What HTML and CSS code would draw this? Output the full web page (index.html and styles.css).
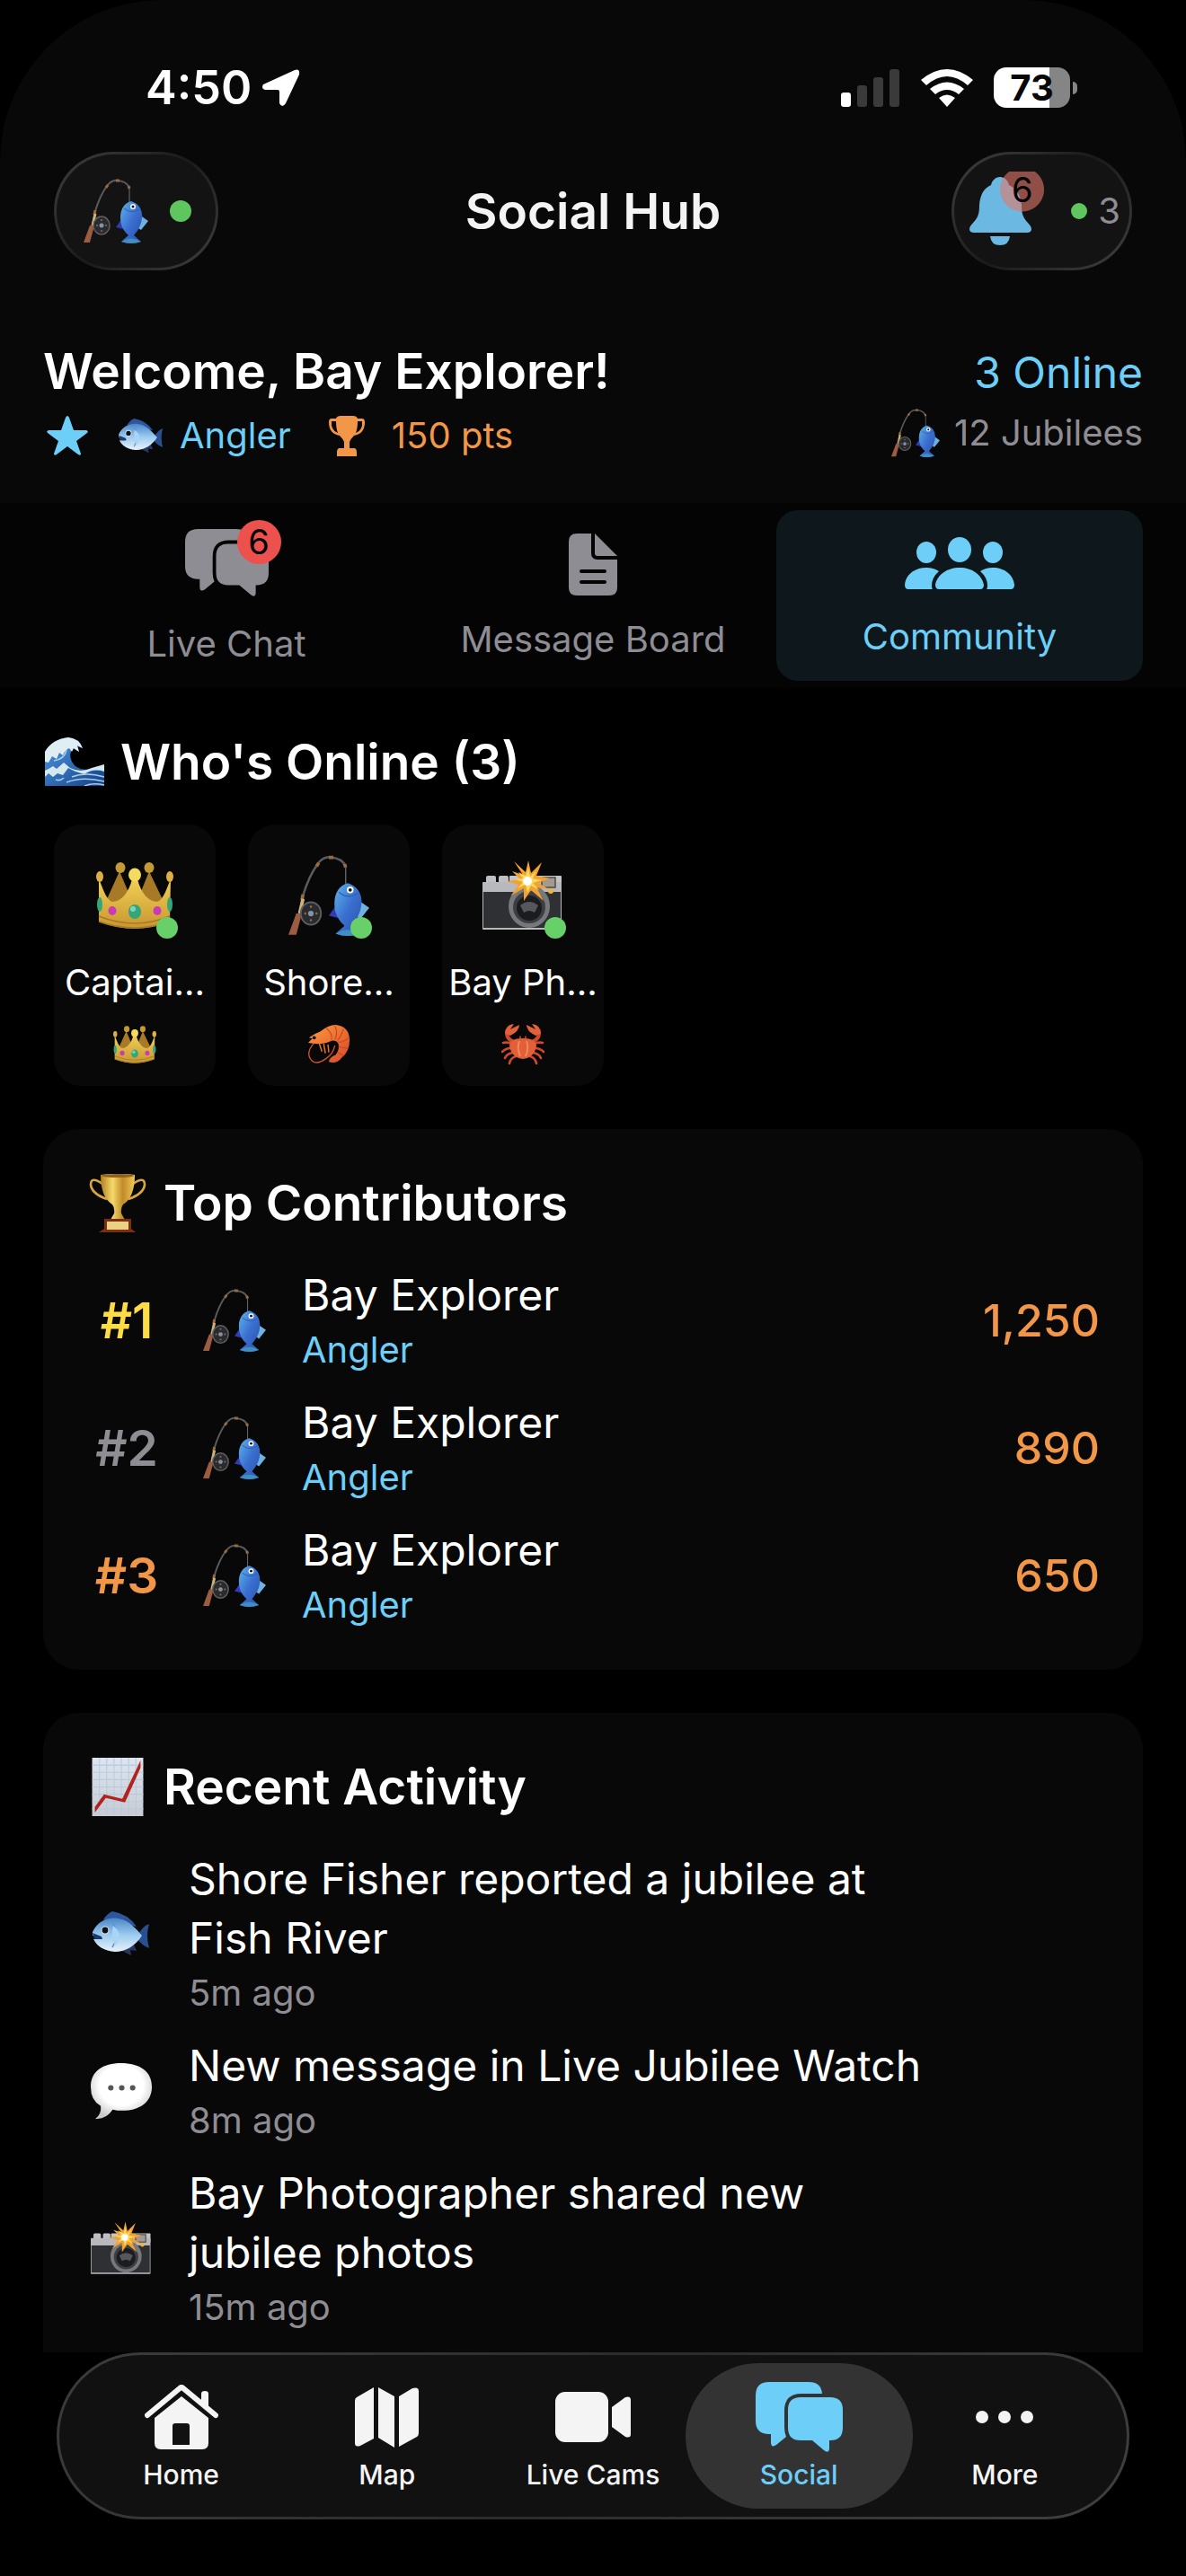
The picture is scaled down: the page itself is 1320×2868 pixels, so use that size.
FILE: index.html
```html
<!DOCTYPE html>
<html lang="en">
<head>
<meta charset="utf-8">
<meta name="viewport" content="width=device-width, initial-scale=1">
<title>Social Hub</title>
<link rel="stylesheet" href="styles.css">
</head>
<body>
<svg class="sprite" aria-hidden="true">
  <defs>
    <linearGradient id="g-fish" x1="0" y1="0" x2="0" y2="1"><stop offset="0" stop-color="#4a86c8"/><stop offset=".5" stop-color="#9ccbf0"/><stop offset="1" stop-color="#e8f1f8"/></linearGradient>
    <linearGradient id="g-catch" x1="0" y1="0" x2="1" y2="1"><stop offset="0" stop-color="#5fb4ea"/><stop offset=".5" stop-color="#3a6fcf"/><stop offset="1" stop-color="#2a4fa8"/></linearGradient>
    <linearGradient id="g-gold" x1="0" y1="0" x2="1" y2="0"><stop offset="0" stop-color="#b07f22"/><stop offset=".35" stop-color="#f6d96a"/><stop offset=".65" stop-color="#c08a28"/><stop offset="1" stop-color="#f0c958"/></linearGradient>
    <linearGradient id="g-crown" x1="0" y1="0" x2="0" y2="1"><stop offset="0" stop-color="#f0d055"/><stop offset="1" stop-color="#c99631"/></linearGradient>
    <radialGradient id="g-bubble" cx=".5" cy=".4" r=".6"><stop offset=".6" stop-color="#fff"/><stop offset="1" stop-color="#c9c9cb"/></radialGradient>
    <linearGradient id="g-paper" x1="0" y1="0" x2="0" y2="1"><stop offset="0" stop-color="#dde5ee"/><stop offset="1" stop-color="#c9ccd2"/></linearGradient>
    <linearGradient id="g-prawn" x1="0" y1="0" x2="1" y2="1"><stop offset="0" stop-color="#ff9a3d"/><stop offset="1" stop-color="#d9482a"/></linearGradient>
    <linearGradient id="g-sea" x1="0" y1="0" x2="1" y2="1"><stop offset="0" stop-color="#4f9be0"/><stop offset="1" stop-color="#123f8a"/></linearGradient>
  </defs>

  <symbol id="rod" viewBox="0 0 72 72">
    <path d="M10 52L13 36C16 26 21 15 26 8Q31 1 38 2Q48 3 51 10" fill="none" stroke="#5b5a5e" stroke-width="2"/>
    <path d="M25 10l2-3M36 2h4M50 8l1 3M12 40l1-5" stroke="#9a6a3c" stroke-width="3"/>
    <path d="M51 10V27" stroke="#6b6f76" stroke-width="1"/>
    <path d="M7 52h5L7 71H0z" fill="#9b5c42"/>
    <path d="M10 52l3-13" stroke="#cdb27a" stroke-width="3"/>
    <ellipse cx="20" cy="52" rx="9" ry="10" fill="#2a2b2e" stroke="#5d5f64" stroke-width="1.500"/>
    <circle cx="20" cy="52" r="2.500" fill="#7f94a8"/>
    <circle cx="20" cy="46" r="1" fill="#a5673d"/><circle cx="25" cy="52" r="1" fill="#a5673d"/><circle cx="20" cy="58" r="1" fill="#a5673d"/><circle cx="15" cy="52" r="1" fill="#a5673d"/>
    <path d="M43 44L36 54l8 2z" fill="#3439b4"/>
    <path d="M62 40l10 7-8 10-5-3z" fill="#6fb2e2"/>
    <path d="M53 25C62 28 66 35 65 44C64 53 60 58 56 63L64 70Q53 74 42 70L50 63C43 57 41 50 41 43C41 34 45 27 53 25z" fill="url(#g-catch)"/>
    <path d="M45 33q8 7 17 1" fill="none" stroke="#2d5fae" stroke-width="1"/>
    <path d="M42 70q11-7 22 0-11 4-22 0z" fill="#3f8fc4"/>
    <circle cx="55" cy="31" r="3" fill="#fff"/><circle cx="55" cy="31" r="1.500" fill="#111"/>
  </symbol>

  <symbol id="fish" viewBox="0 0 64 50">
    <path d="M12 9Q17 2 22 0Q40 3 49 17z" fill="#2d569c"/>
    <path d="M50 27Q56 16 63 14Q59 27 63 41Q55 38 50 31z" fill="#2a4f8e"/>
    <path d="M29 42l14 7-1-6 7 1-3-7z" fill="#27375f"/>
    <path d="M0 23C6 10 18 6 29 8C41 10 49 20 55 27C48 38 37 45 25 45C13 44 5 39 1 31L10 31Q6 27 0 27z" fill="url(#g-fish)"/>
    <path d="M22 13Q31 25 22 40" fill="none" stroke="#5a92cc" stroke-width="1.500"/>
    <path d="M23 16Q36 27 25 38Q20 27 23 16z" fill="#a9d4f5"/>
    <path d="M0 24l10 4 1 3-9 0z" fill="#1f3a72"/>
    <circle cx="14" cy="21" r="4.500" fill="#cfe2f2"/><circle cx="14" cy="21" r="3.400" fill="#111"/>
  </symbol>

  <symbol id="crown" viewBox="0 0 86 74">
    <path d="M8 50L26 10 43 50zM43 50L59 10 78 50z" fill="#a87a26"/>
    <ellipse cx="27" cy="6" rx="5.500" ry="6" fill="#c59a35"/><ellipse cx="59" cy="6" rx="5.500" ry="6" fill="#c59a35"/>
    <path d="M3 18C9 34 12 42 18 44C28 44 36 34 40 19H46C50 34 58 44 68 44C74 42 77 34 83 18L82 66Q43 82 3 66z" fill="url(#g-crown)"/>
    <ellipse cx="43" cy="14" rx="7" ry="7.500" fill="#f6da5d"/>
    <ellipse cx="4" cy="16" rx="4" ry="6" fill="#dcb044"/><ellipse cx="82" cy="16" rx="4" ry="6" fill="#dcb044"/>
    <path d="M3 60Q43 76 82 60M3 66Q43 80 82 66" fill="none" stroke="#a87a26" stroke-width="1.500"/>
    <ellipse cx="43" cy="55" rx="7" ry="8" fill="#33a67c"/><ellipse cx="41" cy="52" rx="3" ry="3" fill="#7fd6b4"/>
    <ellipse cx="18" cy="54" rx="4.500" ry="5" fill="#c93bb4"/><ellipse cx="68" cy="54" rx="4.500" ry="5" fill="#c93bb4"/>
    <ellipse cx="4" cy="47" rx="3" ry="8" fill="#33a67c"/><ellipse cx="82" cy="47" rx="3" ry="8" fill="#33a67c"/>
  </symbol>

  <symbol id="camera" viewBox="0 0 90 78">
    <rect x="4" y="17" width="11" height="9" rx="2" fill="#bfc0c4"/><rect x="18" y="17" width="11" height="9" rx="2" fill="#bfc0c4"/>
    <rect x="30" y="17" width="58" height="14" rx="1" fill="#c5c6c9"/>
    <rect x="0" y="24" width="88" height="53" rx="1" fill="#b8b9bd"/>
    <rect x="1" y="35" width="86" height="40" fill="#2f3033"/>
    <rect x="66" y="19" width="15" height="11" fill="#a59a92" stroke="#4a4a4a" stroke-width="1.500"/>
    <ellipse cx="52" cy="51" rx="23" ry="24" fill="#77787c"/>
    <circle cx="52" cy="52" r="18" fill="#3d3e42"/><circle cx="52" cy="53" r="14" fill="#1b1c1f"/>
    <path d="M42 50q10-8 20 0l-4 8q-6-4-12 0z" fill="#55575c"/>
    <circle cx="76" cy="34" r="3" fill="#e6b93e"/>
    <path d="M51 0l3 14L66 2 60 17l15 3-13 5 12 7-14-2 8 15-14-12-8 12 0-14-14 8 8-12-13-4 15-2-9-9 12 4-10-15 13 12z" fill="#f3a231"/>
    <path d="M51 8l2 10 7-7-4 9 10 2-10 3 7 8-9-5-4 8-2-9-9 4 6-7-9-3 9-1-5-7 8 4z" fill="#fbd95c"/>
    <circle cx="50" cy="23" r="5" fill="#fff"/>
  </symbol>

  <symbol id="shrimp" viewBox="0 0 50 46">
    <path d="M8 21Q-2 32 4 40T22 39Q30 34 32 24" fill="none" stroke="#c8562c" stroke-width="1.400"/>
    <path d="M14 22l3 9M19 22l2 11M24 23l1 9" stroke="#e0702f" stroke-width="1.600"/>
    <path d="M1 21L6 16 2 15Q9 10 15 8Q24 0 33 0Q49 2 49 18Q49 31 40 38Q34 46 25 43Q26 37 33 35Q38 28 36 22Q33 17 27 19Q17 24 1 21z" fill="url(#g-prawn)"/>
    <path d="M22 4q8 6 6 14M32 1q4 9 0 16M42 5q-3 9-7 13M48 15q-7 6-12 5M47 27q-6 0-11-2M42 36q-4-3-7-4" fill="none" stroke="#c4491f" stroke-width="1.200"/>
    <circle cx="8" cy="15" r="2" fill="#111"/>
  </symbol>

  <symbol id="crab" viewBox="0 0 48 46">
    <g fill="none" stroke="#cf4a2c" stroke-width="2.600" stroke-linecap="round">
      <path d="M12 22Q6 20 2 21M11 27Q5 27 1 31M13 32Q6 33 4 38M16 36Q10 38 9 44M36 22Q42 20 46 21M37 27Q43 27 47 31M35 32Q42 33 44 38M32 36Q38 38 39 44"/>
      <path d="M14 20Q4 16 7 8M34 20Q44 16 41 8" stroke-width="4"/>
      <path d="M21 18v-4M27 18v-4" stroke-width="1.500"/>
    </g>
    <path d="M4 11Q4 1 14 0L10 6 20 1Q20 8 10 13zM44 11Q44 1 34 0L38 6 28 1Q28 8 38 13z" fill="#e2603a"/>
    <path d="M24 16Q39 16 39 25Q36 38 24 39Q12 38 9 25Q9 16 24 16z" fill="#e35f38"/>
    <path d="M20 19Q17 27 21 36M28 19Q31 27 27 36" fill="none" stroke="#f08a5a" stroke-width="2"/>
  </symbol>

  <symbol id="wave" viewBox="0 0 66 54">
    <path d="M0 16Q8 2 26 0Q38 1 42 12L36 10 38 16 31 12Q26 18 30 27Q36 38 50 35L66 32V54H0z" fill="url(#g-sea)"/>
    <path d="M0 16Q8 2 26 0Q38 1 42 12L36 9 38 16 32 12 30 16 27 12Q22 14 20 20L16 17 13 24 8 21 4 28 0 27z" fill="#dfeef2"/>
    <path d="M4 35l5-3 4 3 8-7 7 6Q40 40 52 34L66 30v8Q54 34 44 41L34 38 26 34 20 42 14 40 9 44 4 40 0 44v-7z" fill="#d5e8ee"/>
    <path d="M30 44Q45 38 66 44M24 50Q42 43 66 49M44 54Q54 50 66 53M12 47q5 2 9-2M10 26Q22 24 24 14" fill="none" stroke="#a9cbe4" stroke-width="1.600"/>
  </symbol>

  <symbol id="trophy-gold" viewBox="0 0 64 65">
    <path d="M15 11Q2 2 2 12Q3 22 20 28M49 11Q62 2 62 12Q61 22 44 28" fill="none" stroke="#d9a63c" stroke-width="2.600"/>
    <path d="M13 1Q32-2 51 1Q51 26 38 34Q35 38 36 44L40 51H24L28 44Q29 38 26 34Q13 26 13 1z" fill="url(#g-gold)"/>
    <ellipse cx="32" cy="2" rx="18" ry="2" fill="#8f6418"/>
    <path d="M17 50H47V61L52 65H11L17 61z" fill="#7a2f12"/>
    <rect x="20" y="53" width="24" height="9" fill="#ecd182"/>
  </symbol>

  <symbol id="chart" viewBox="0 0 56 64">
    <rect width="56" height="64" fill="url(#g-paper)"/>
    <path d="M0 8H56M0 16H56M0 24H56M0 32H56M0 40H56M0 48H56M0 56H56M8 0V64M16 0V64M24 0V64M32 0V64M40 0V64M48 0V64" stroke="#b5cbe2" stroke-width="1"/>
    <path d="M3 60V54L13 40 33 45 53 3V11L36 49 15 44z" fill="#b3231c"/>
  </symbol>

  <symbol id="bubble" viewBox="0 0 67 67">
    <path d="M33 3C54 3 67 12 67 29C67 46 53 55 35 55C30 55 28 55 24 54Q17 65 5 64Q12 59 11 50Q0 44 0 29C0 12 13 3 33 3z" fill="url(#g-bubble)"/>
    <circle cx="22" cy="30" r="3" fill="#555"/><circle cx="34" cy="30" r="3" fill="#555"/><circle cx="46" cy="30" r="3" fill="#555"/>
  </symbol>

  <symbol id="chat" viewBox="0 0 97 78">
    <path d="M15 0H59Q73 0 74 13H51Q32 13 32 32V50Q32 56 34 61L23 70Q17 74 17 67V58H15Q0 58 0 43V15Q0 0 15 0z"/>
    <path d="M50 17H83Q97 17 97 31V51Q97 65 83 65H82V75Q81 80 76 76L63 65H50Q36 65 36 51V31Q36 17 50 17z"/>
  </symbol>
</svg>

<header class="top">
  <div class="status">
    <div class="status-group">
      <span class="clock">4:50</span>
      <svg class="ico-arrow" viewBox="0 0 42 42"><path d="M36 1Q42-1 41 6L26 38Q22 44 19 38V25Q19 23 17 23H4Q-2 22 1 17z"/></svg>
    </div>
    <div class="status-group status-right">
      <svg class="ico-signal" viewBox="0 0 66 42"><rect y="26" width="11" height="16" rx="3"/><g fill="#3a3a3a"><rect x="18" y="18" width="11" height="24" rx="3"/><rect x="36" y="9" width="11" height="33" rx="3"/><rect x="54" width="11" height="42" rx="3"/></g></svg>
      <svg class="ico-wifi" viewBox="0 0 58 42"><path d="M29 42L20 32Q29 25 38 32zM16 28L10 22Q29 7 48 22L42 28Q29 18 16 28zM6 18L0 12Q29-12 58 12L52 18Q29-2 6 18z"/></svg>
      <div class="battery"><span class="battery-level">73</span><i class="battery-nub"></i></div>
    </div>
  </div>

  <div class="navbar">
    <button class="pill pill-profile" aria-label="Profile"><svg class="em-72"><use href="#rod"/></svg><i class="dot dot-lg"></i></button>
    <h1 class="title">Social Hub</h1>
    <button class="pill pill-alerts" aria-label="Notifications">
      <span class="bell">
        <svg class="ico-bell" viewBox="0 0 69 76"><path d="M34 0C39 0 43 4 44 9C53 13 57 21 58 31C58 42 60 45 64 50Q69 55 69 58Q69 62 64 62H5Q0 62 0 58Q0 55 5 50C9 45 11 42 11 31C12 21 15 13 24 9C25 4 29 0 34 0zM23 66H45Q44 76 34 76Q24 76 23 66z"/></svg>
        <span class="bell-badge">6</span>
      </span>
      <i class="dot dot-sm"></i><span class="count">3</span>
    </button>
  </div>

  <section class="welcome">
    <div>
      <h2 class="welcome-name">Welcome, Bay Explorer!</h2>
      <div class="welcome-meta">
        <svg class="ico-star" viewBox="0 0 46 44"><path d="M23 0Q24 0 25 2L30 16H44Q47 17 45 19L33 28 38 42Q38 45 35 43L23 34 11 43Q8 45 8 42L13 28 1 19Q-1 17 2 16H16L21 2Q22 0 23 0z"/></svg>
        <span class="level"><svg class="em-fish-sm"><use href="#fish"/></svg>Angler</span>
        <svg class="ico-cup" viewBox="0 0 40 45"><path d="M8 3Q9 0 13 0H27Q31 0 32 3H37Q40 3 40 7Q40 20 28 22Q24 26 23 29V36H29Q31 37 31 40V45H9V40Q9 37 11 36H17V29Q16 26 12 22Q0 20 0 7Q0 3 3 3zM8 6H3Q2 16 10 19Q8 14 8 6zM32 6Q32 14 30 19Q38 16 37 6z"/></svg>
        <span class="points">150 pts</span>
      </div>
    </div>
    <div class="welcome-side">
      <p class="online">3 Online</p>
      <p class="jubilees"><svg class="em-54"><use href="#rod"/></svg>12 Jubilees</p>
    </div>
  </section>
</header>

<div class="tabs" role="tablist">
  <button class="tab" role="tab" aria-selected="false">
    <span class="tab-icon"><svg class="ico-chat-sm"><use href="#chat"/></svg><span class="badge">6</span></span>
    Live Chat
  </button>
  <button class="tab" role="tab" aria-selected="false">
    <span class="tab-icon tab-icon-doc"><svg class="ico-doc" viewBox="0 0 54 69"><path fill-rule="evenodd" d="M9 0H25V22Q25 29 32 29H54V60Q54 69 45 69H9Q0 69 0 60V9Q0 0 9 0zM14 40Q12 40 12 42T14 44H40Q42 44 42 42T40 40zM14 52Q12 52 12 54T14 56H40Q42 56 42 54T40 52z"/><path d="M29 0L54 25H32Q29 25 29 22z"/></svg></span>
    Message Board
  </button>
  <button class="tab tab-active" role="tab" aria-selected="true">
    <span class="tab-icon"><svg class="ico-people" viewBox="0 0 122 58"><ellipse cx="61" cy="14" rx="13" ry="14"/><ellipse cx="24" cy="17" rx="11" ry="12"/><ellipse cx="98" cy="17" rx="11" ry="12"/><path d="M38 58Q34 58 34 53C36 42 47 34 61 34C75 34 86 42 88 53Q88 58 84 58zM4 58Q0 58 0 53C1 42 11 34 24 34Q32 34 38 38Q30 45 30 54Q30 57 31 58zM118 58Q122 58 122 53C121 42 111 34 98 34Q90 34 84 38Q92 45 92 54Q92 57 91 58z"/></svg></span>
    Community
  </button>
</div>

<main class="feed">
  <section>
    <h2 class="heading"><svg class="em-wave"><use href="#wave"/></svg>Who's Online (3)</h2>
    <ul class="members">
      <li class="member"><span class="avatar"><svg class="em-crown"><use href="#crown"/></svg><i class="dot dot-avatar"></i></span><span class="member-name">Captai...</span><svg class="em-48"><use href="#crown"/></svg></li>
      <li class="member"><span class="avatar"><svg class="em-90"><use href="#rod"/></svg><i class="dot dot-avatar"></i></span><span class="member-name">Shore...</span><svg class="em-48"><use href="#shrimp"/></svg></li>
      <li class="member"><span class="avatar"><svg class="em-90"><use href="#camera"/></svg><i class="dot dot-avatar"></i></span><span class="member-name">Bay Ph...</span><svg class="em-48"><use href="#crab"/></svg></li>
    </ul>
  </section>

  <section class="card">
    <h2 class="heading"><svg class="em-title"><use href="#trophy-gold"/></svg>Top Contributors</h2>
    <ol class="rows">
      <li class="row"><span class="rank rank-1">#1</span><span class="row-icon"><svg class="em-70"><use href="#rod"/></svg></span><div class="row-text"><p class="row-main">Bay Explorer</p><p class="row-sub row-level">Angler</p></div><span class="score">1,250</span></li>
      <li class="row"><span class="rank rank-2">#2</span><span class="row-icon"><svg class="em-70"><use href="#rod"/></svg></span><div class="row-text"><p class="row-main">Bay Explorer</p><p class="row-sub row-level">Angler</p></div><span class="score">890</span></li>
      <li class="row"><span class="rank rank-3">#3</span><span class="row-icon"><svg class="em-70"><use href="#rod"/></svg></span><div class="row-text"><p class="row-main">Bay Explorer</p><p class="row-sub row-level">Angler</p></div><span class="score">650</span></li>
    </ol>
  </section>

  <section class="card card-last">
    <h2 class="heading"><svg class="em-title"><use href="#chart"/></svg>Recent Activity</h2>
    <ul class="rows">
      <li class="row"><span class="row-icon"><svg class="em-64"><use href="#fish"/></svg></span><div class="row-text"><p class="row-main">Shore Fisher reported a jubilee at Fish River</p><p class="row-sub">5m ago</p></div></li>
      <li class="row"><span class="row-icon"><svg class="em-68"><use href="#bubble"/></svg></span><div class="row-text"><p class="row-main">New message in Live Jubilee Watch</p><p class="row-sub">8m ago</p></div></li>
      <li class="row"><span class="row-icon"><svg class="em-68"><use href="#camera"/></svg></span><div class="row-text"><p class="row-main">Bay Photographer shared new jubilee photos</p><p class="row-sub">15m ago</p></div></li>
    </ul>
  </section>
</main>

<nav class="tabbar">
  <a class="item" href="#home"><span class="item-icon"><svg class="ico-home" viewBox="0 0 82 72"><path fill-rule="evenodd" d="M11 37L41 13 71 37V65Q71 72 64 72H18Q11 72 11 65zM31 46V67H50V46Q50 43 47 43H34Q31 43 31 46z"/><path d="M63 20V10Q63 7 67 7T71 10V28z"/><path d="M3 34L39 4Q41 2 43 4L79 34" fill="none" stroke="currentColor" stroke-width="6" stroke-linecap="round"/></svg></span>Home</a>
  <a class="item" href="#map"><span class="item-icon"><svg class="ico-map" viewBox="0 0 71 67"><path d="M0 15Q0 12 2 11L21 0V57L6 65Q0 67 0 62zM26 0L44 10V67L26 56zM49 10L64 1Q71-1 71 4V50Q71 54 69 55L49 66z"/></svg></span>Map</a>
  <a class="item" href="#cams"><span class="item-icon"><svg class="ico-cam" viewBox="0 0 84 56"><rect width="59" height="56" rx="11"/><path d="M63 17L78 6Q84 4 84 9V47Q84 52 78 50L63 39z"/></svg></span>Live Cams</a>
  <a class="item item-active" href="#social" aria-current="page"><span class="item-icon"><svg class="ico-chat"><use href="#chat"/></svg></span>Social</a>
  <a class="item" href="#more"><span class="item-icon"><svg class="ico-more" viewBox="0 0 64 14"><circle cx="7" cy="7" r="7"/><circle cx="32" cy="7" r="7"/><circle cx="57" cy="7" r="7"/></svg></span>More</a>
</nav>
</body>
</html>
```
FILE: styles.css
```css
:root {
  --blue: #6dcff8;
  --orange: #f29748;
  --green: #67d068;
  --grey: #8e8d93;
  --panel: #080808;
}

* { box-sizing: border-box; margin: 0; padding: 0; }

body {
  display: flex;
  flex-direction: column;
  height: 100vh;
  background: #000;
  color: #fff;
  font-family: Inter, "Liberation Sans", sans-serif;
  font-size: 40px;
  line-height: 50px;
}

svg { display: block; flex: none; fill: currentColor; }
button { border: 0; background: none; color: inherit; font: inherit; }
ul, ol { list-style: none; }
.sprite { position: absolute; width: 0; height: 0; }

/* Header */
.top { background: var(--panel); border-radius: 180px 180px 0 0; }

.status {
  display: flex;
  align-items: center;
  justify-content: space-between;
  height: 169px;
  padding: 26px 121px 0 162px;
}
.status-group { display: flex; align-items: center; gap: 12px; }
.status-right { gap: 23px; }
.clock { font-size: 52px; font-weight: 600; }
.ico-arrow { width: 42px; height: 42px; }
.ico-signal { width: 66px; height: 42px; }
.ico-wifi { width: 58px; height: 42px; }

.battery { display: flex; align-items: center; gap: 3px; }
.battery-level {
  width: 85px;
  border-radius: 14px;
  background: linear-gradient(90deg, #fff 73%, #858585 73%);
  color: #080808;
  font-size: 40px;
  font-weight: 700;
  line-height: 45px;
  text-align: center;
}
.battery-nub { width: 5px; height: 14px; border-radius: 0 5px 5px 0; background: #858585; }

.navbar {
  display: grid;
  grid-template-columns: 1fr auto 1fr;
  align-items: center;
  padding: 0 60px;
}
.title { font-size: 55px; font-weight: 600; line-height: 68px; color: #f4f4f4; }

.pill {
  display: flex;
  align-items: center;
  height: 132px;
  border: 3px solid transparent;
  border-radius: 66px;
  background:
    linear-gradient(#131313, #131313) padding-box,
    linear-gradient(135deg, #404040, #1a1a1a 50%, #404040) border-box;
}
.pill-profile { justify-self: start; gap: 24px; padding: 0 27px 0 30px; }
.pill-alerts { justify-self: end; padding: 0 10px 0 17px; color: var(--grey); }

.dot { flex: none; border-radius: 50%; background: var(--green); }
.dot-lg { width: 24px; height: 24px; background: #5fc55e; }
.dot-sm { width: 18px; height: 18px; margin: 0 12px 0 30px; background: #5fc55e; }

.bell { position: relative; padding: 6px 14px 6px 0; }
.ico-bell { width: 69px; height: 76px; color: #6bb8e3; }
.bell-badge {
  position: absolute;
  top: 0;
  right: 0;
  width: 49px;
  height: 45px;
  background: radial-gradient(circle at 50% 20px, rgb(228 120 105 / .6) 24px, transparent 25px);
  color: #000;
  font-size: 38px;
  line-height: 40px;
  text-align: center;
}

.welcome {
  display: flex;
  align-items: center;
  justify-content: space-between;
  padding: 76px 48px 51px;
}
.welcome-name { font-size: 55px; font-weight: 600; line-height: 72px; }
.welcome-meta { display: flex; align-items: center; margin-top: 12px; padding-left: 4px; line-height: 48px; }
.ico-star { width: 46px; height: 44px; color: var(--blue); }
.level { display: flex; align-items: center; gap: 18px; margin: 0 42px 0 34px; color: var(--blue); }
.ico-cup { width: 40px; height: 45px; color: var(--orange); }
.points { margin-left: 30px; color: var(--orange); }
.welcome-side { display: flex; flex-direction: column; align-items: flex-end; gap: 10px; padding-top: 8px; }
.online { font-size: 48px; line-height: 60px; color: var(--blue); }
.jubilees { display: flex; align-items: center; gap: 16px; color: var(--grey); }

/* Section tabs */
.tabs { display: grid; grid-template-columns: repeat(3, 1fr); padding: 8px 48px; background: #040404; }
.tab {
  display: flex;
  flex-direction: column;
  align-items: center;
  justify-content: center;
  gap: 16px;
  height: 190px;
  border-radius: 24px;
  color: var(--grey);
}
.tab-active { background: #0e181c; color: var(--blue); }
.tab-icon { position: relative; padding: 5px 0 12px; }
.tab-icon-doc { padding-bottom: 8px; }
.ico-chat-sm { width: 93px; height: 75px; }
.ico-doc { width: 54px; height: 69px; }
.ico-people { width: 122px; height: 58px; }
.badge {
  position: absolute;
  top: -5px;
  right: -14px;
  width: 49px;
  height: 49px;
  border-radius: 50%;
  background: #ec514e;
  color: #000;
  font-size: 38px;
  line-height: 49px;
}

/* Feed */
.feed {
  flex: 1;
  min-height: 0;
  display: flex;
  flex-direction: column;
  gap: 48px;
  padding: 48px 48px 0;
  overflow-y: auto;
  scrollbar-width: none;
}
.feed > * { flex: none; }
.heading { display: flex; align-items: center; gap: 16px; margin-bottom: 36px; font-size: 55px; font-weight: 600; line-height: 68px; }

.members { display: flex; gap: 36px; padding: 0 12px; }
.member {
  display: flex;
  flex-direction: column;
  align-items: center;
  width: 180px;
  padding: 31px 0 22px;
  border-radius: 30px;
  background: var(--panel);
}
.avatar { position: relative; display: grid; place-items: center; width: 96px; height: 96px; }
.dot-avatar { position: absolute; right: 0; bottom: 0; width: 24px; height: 24px; }
.member-name { margin: 24px 0 20px; }

.card { padding: 48px 48px 44px; border-radius: 40px; background: var(--panel); }
.card-last { padding-bottom: 96px; }
.rows { display: flex; flex-direction: column; gap: 20px; }
.row { display: flex; align-items: center; gap: 36px; }
.rank { width: 90px; font-size: 55px; font-weight: 600; text-align: center; }
.rank-1 { color: #fcdb45; }
.rank-2 { color: var(--grey); }
.rank-3 { color: var(--orange); }
.row-icon { display: grid; place-items: center; width: 78px; }
.row-text { flex: 1; max-width: 836px; }
.row-main { font-size: 48px; line-height: 66px; }
.row-sub { line-height: 56px; color: var(--grey); }
.row-level { color: var(--blue); }
.score { margin-left: auto; color: var(--orange); font-size: 50px; font-weight: 500; }

/* Emoji sizes */
.em-48 { width: 48px; height: 48px; }
.em-54 { width: 54px; height: 54px; }
.em-64 { width: 64px; height: 50px; }
.em-68 { width: 68px; height: 68px; }
.em-70 { width: 70px; height: 70px; }
.em-72 { width: 72px; height: 72px; }
.em-90 { width: 90px; height: 90px; }
.em-crown { width: 86px; height: 74px; }
.em-fish-sm { width: 50px; height: 39px; }
.em-wave { width: 70px; height: 54px; }
.em-title { width: 70px; height: 65px; }

/* Bottom navigation */
.tabbar {
  display: grid;
  grid-template-columns: repeat(5, 1fr);
  margin: 0 63px 63px;
  padding: 9px 21px;
  border: 3px solid transparent;
  border-radius: 93px;
  background:
    linear-gradient(#111, #111) padding-box,
    linear-gradient(135deg, #3c3c3c, #2c2c2c 50%, #404040) border-box;
}
.item {
  position: relative;
  z-index: 0;
  display: flex;
  flex-direction: column;
  align-items: center;
  justify-content: center;
  gap: 6px;
  height: 162px;
  color: #f4f4f4;
  font-size: 30px;
  font-weight: 500;
  line-height: 36px;
  text-decoration: none;
}
.item-active { color: var(--blue); }
.item-active::before {
  content: "";
  position: absolute;
  inset: 0 -12px;
  z-index: -1;
  border-radius: 81px;
  background: #333;
}
.item-icon { display: grid; place-items: center; height: 80px; }
.ico-home { width: 82px; height: 72px; }
.ico-map { width: 71px; height: 67px; }
.ico-cam { width: 84px; height: 56px; }
.ico-chat { width: 97px; height: 78px; }
.ico-more { width: 64px; height: 14px; }
```
